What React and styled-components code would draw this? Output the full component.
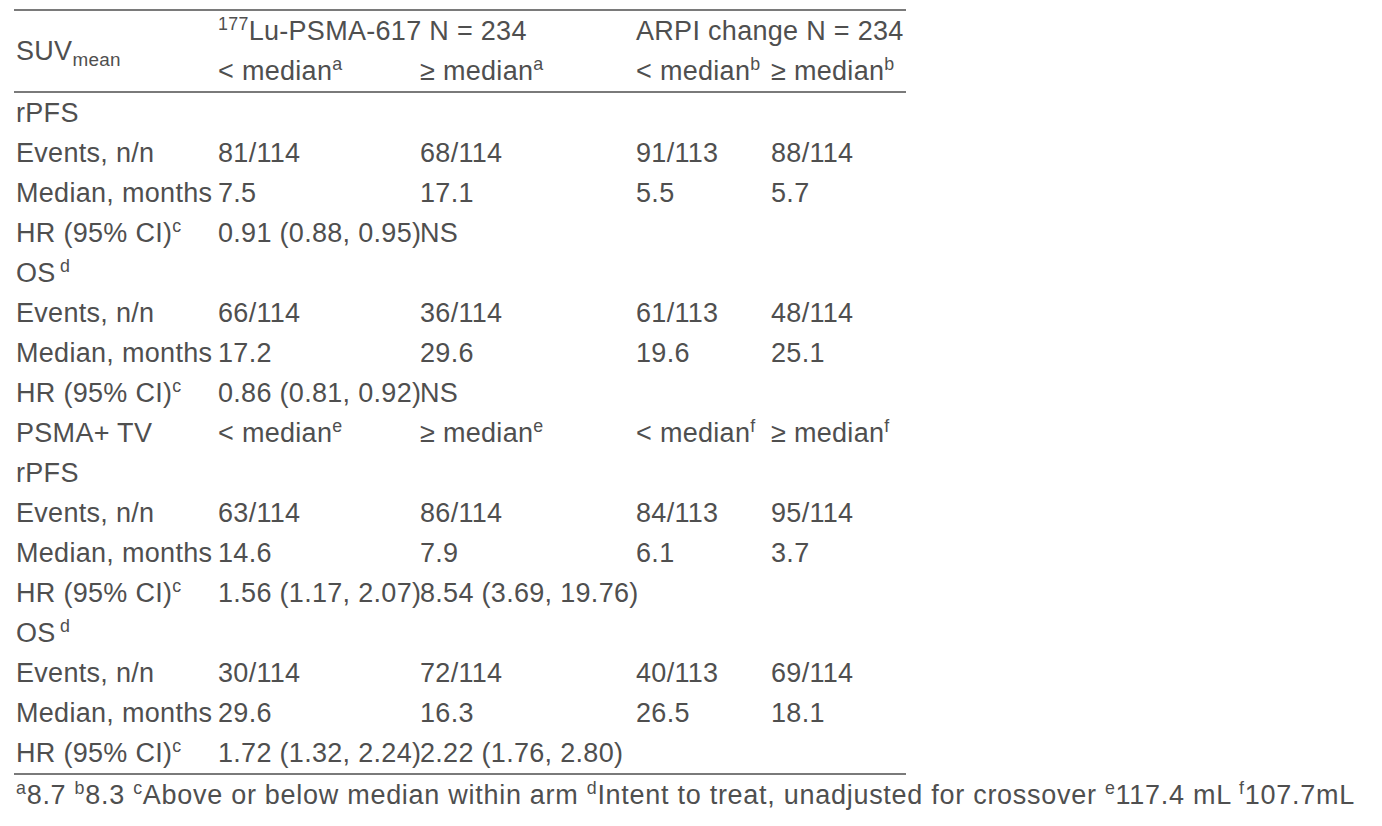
import React from "react";
import styled, { createGlobalStyle } from "styled-components";

const GlobalStyle = createGlobalStyle`
  html, body {
    margin: 0;
    padding: 0;
    background: #ffffff;
  }
  body {
    font-family: "Liberation Sans", Arial, Helvetica, sans-serif;
    color: #4f4f4f;
  }
`;

const Page = styled.div`
  padding: 9px 0 0 14px;
`;

const Table = styled.table`
  border-collapse: collapse;
  table-layout: fixed;
  width: 892px;
  border-top: 2px solid #7a7a7a;
  border-bottom: 2px solid #7a7a7a;
  font-size: 27px;
  letter-spacing: 0.3px;
`;

const Body = styled.tbody`
  border-top: 2px solid #7a7a7a;
`;

const Cell = styled.td`
  padding: 0 0 0 2px;
  height: 40px;
  line-height: 40px;
  vertical-align: middle;
  white-space: nowrap;
  overflow: visible;
  font-weight: 400;
  text-align: left;
`;

const HeadCell = styled(Cell).attrs({ as: "th" })``;

const Sup = styled.sup`
  font-size: 0.66em;
  line-height: 0;
  vertical-align: 0.55em;
  margin-left: ${(p) => (p.$gap ? "0.25em" : "0")};
`;

const Sub = styled.sub`
  font-size: 0.7em;
  line-height: 0;
  vertical-align: -0.3em;
`;

const Footnote = styled.div`
  padding-left: 2px;
  font-size: 27px;
  letter-spacing: 0.72px;
  line-height: 40px;
  white-space: nowrap;
`;

const HR = (
  <>
    HR (95% CI)<Sup>c</Sup>
  </>
);

const OS = (
  <>
    OS<Sup $gap>d</Sup>
  </>
);

const med = (sign, mark) => (
  <>
    {sign} median<Sup>{mark}</Sup>
  </>
);

const rows = [
  ["rPFS"],
  ["Events, n/n", "81/114", "68/114", "91/113", "88/114"],
  ["Median, months", "7.5", "17.1", "5.5", "5.7"],
  [HR, "0.91 (0.88, 0.95)", "NS", "", ""],
  [OS],
  ["Events, n/n", "66/114", "36/114", "61/113", "48/114"],
  ["Median, months", "17.2", "29.6", "19.6", "25.1"],
  [HR, "0.86 (0.81, 0.92)", "NS", "", ""],
  ["PSMA+ TV", med("<", "e"), med("≥", "e"), med("<", "f"), med("≥", "f")],
  ["rPFS"],
  ["Events, n/n", "63/114", "86/114", "84/113", "95/114"],
  ["Median, months", "14.6", "7.9", "6.1", "3.7"],
  [HR, "1.56 (1.17, 2.07)", "8.54 (3.69, 19.76)", "", ""],
  [OS],
  ["Events, n/n", "30/114", "72/114", "40/113", "69/114"],
  ["Median, months", "29.6", "16.3", "26.5", "18.1"],
  [HR, "1.72 (1.32, 2.24)", "2.22 (1.76, 2.80)", "", ""],
];

export default function App() {
  return (
    <Page>
      <GlobalStyle />
      <Table>
        <colgroup>
          <col style={{ width: 202 }} />
          <col style={{ width: 202 }} />
          <col style={{ width: 216 }} />
          <col style={{ width: 135 }} />
          <col style={{ width: 137 }} />
        </colgroup>
        <thead>
          <tr>
            <HeadCell rowSpan={2}>
              SUV<Sub>mean</Sub>
            </HeadCell>
            <HeadCell colSpan={2}>
              <Sup>177</Sup>Lu-PSMA-617 N = 234
            </HeadCell>
            <HeadCell colSpan={2}>ARPI change N = 234</HeadCell>
          </tr>
          <tr>
            <HeadCell>{med("<", "a")}</HeadCell>
            <HeadCell>{med("≥", "a")}</HeadCell>
            <HeadCell>{med("<", "b")}</HeadCell>
            <HeadCell>{med("≥", "b")}</HeadCell>
          </tr>
        </thead>
        <Body>
          {rows.map((r, i) => (
            <tr key={i}>
              {r.length === 1 ? (
                <Cell colSpan={5}>{r[0]}</Cell>
              ) : (
                r.map((c, j) => <Cell key={j}>{c}</Cell>)
              )}
            </tr>
          ))}
        </Body>
      </Table>
      <Footnote>
        <Sup>a</Sup>8.7 <Sup>b</Sup>8.3 <Sup>c</Sup>Above or below median within arm{" "}
        <Sup>d</Sup>Intent to treat, unadjusted for crossover <Sup>e</Sup>117.4 mL{" "}
        <Sup>f</Sup>107.7mL
      </Footnote>
    </Page>
  );
}
